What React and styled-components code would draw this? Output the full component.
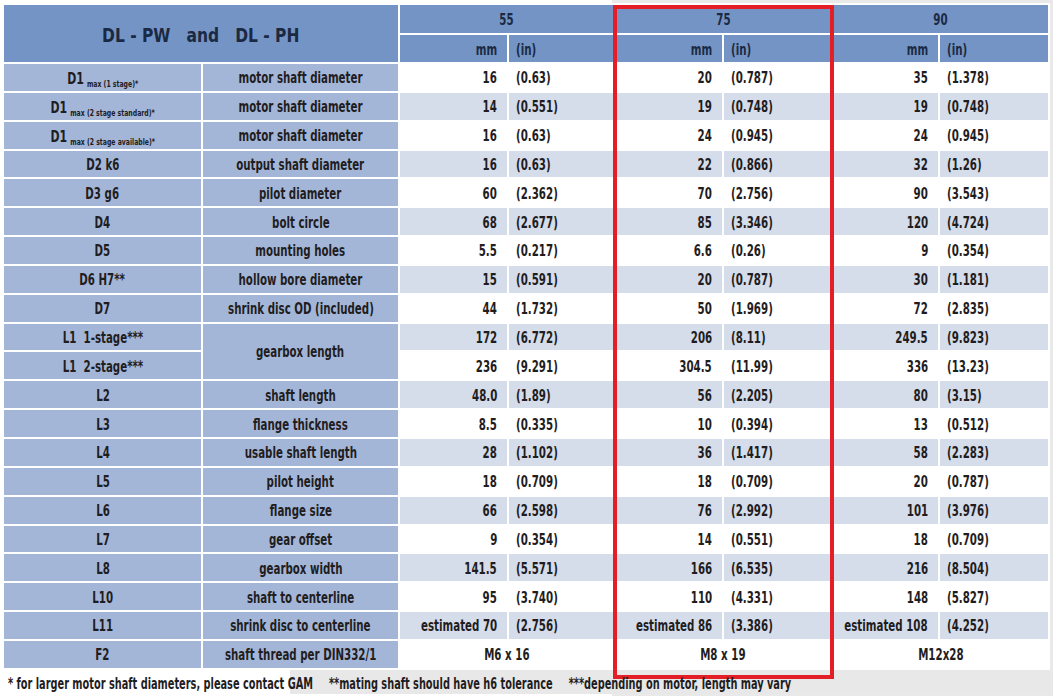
import React from 'react';
import styled, { createGlobalStyle } from 'styled-components';

const GlobalStyle = createGlobalStyle`
    body {
        margin: 0;
        background: #fff;
        font-family: "DejaVu Sans Condensed", "Liberation Sans", sans-serif;
    }
`;

const sizes = ['55', '75', '90'];

const rows = [
    { label: 'D1', sub: 'max (1 stage)*', desc: 'motor shaft diameter', vals: [['16', '(0.63)'], ['20', '(0.787)'], ['35', '(1.378)']] },
    { label: 'D1', sub: 'max (2 stage standard)*', desc: 'motor shaft diameter', vals: [['14', '(0.551)'], ['19', '(0.748)'], ['19', '(0.748)']] },
    { label: 'D1', sub: 'max (2 stage available)*', desc: 'motor shaft diameter', vals: [['16', '(0.63)'], ['24', '(0.945)'], ['24', '(0.945)']] },
    { label: 'D2 k6', desc: 'output shaft diameter', vals: [['16', '(0.63)'], ['22', '(0.866)'], ['32', '(1.26)']] },
    { label: 'D3 g6', desc: 'pilot diameter', vals: [['60', '(2.362)'], ['70', '(2.756)'], ['90', '(3.543)']] },
    { label: 'D4', desc: 'bolt circle', vals: [['68', '(2.677)'], ['85', '(3.346)'], ['120', '(4.724)']] },
    { label: 'D5', desc: 'mounting holes', vals: [['5.5', '(0.217)'], ['6.6', '(0.26)'], ['9', '(0.354)']] },
    { label: 'D6 H7**', desc: 'hollow bore diameter', vals: [['15', '(0.591)'], ['20', '(0.787)'], ['30', '(1.181)']] },
    { label: 'D7', desc: 'shrink disc OD (included)', vals: [['44', '(1.732)'], ['50', '(1.969)'], ['72', '(2.835)']] },
    { label: 'L1  1-stage***', desc: 'gearbox length', span: 2, vals: [['172', '(6.772)'], ['206', '(8.11)'], ['249.5', '(9.823)']] },
    { label: 'L1  2-stage***', desc: null, vals: [['236', '(9.291)'], ['304.5', '(11.99)'], ['336', '(13.23)']] },
    { label: 'L2', desc: 'shaft length', vals: [['48.0', '(1.89)'], ['56', '(2.205)'], ['80', '(3.15)']] },
    { label: 'L3', desc: 'flange thickness', vals: [['8.5', '(0.335)'], ['10', '(0.394)'], ['13', '(0.512)']] },
    { label: 'L4', desc: 'usable shaft length', vals: [['28', '(1.102)'], ['36', '(1.417)'], ['58', '(2.283)']] },
    { label: 'L5', desc: 'pilot height', vals: [['18', '(0.709)'], ['18', '(0.709)'], ['20', '(0.787)']] },
    { label: 'L6', desc: 'flange size', vals: [['66', '(2.598)'], ['76', '(2.992)'], ['101', '(3.976)']] },
    { label: 'L7', desc: 'gear offset', vals: [['9', '(0.354)'], ['14', '(0.551)'], ['18', '(0.709)']] },
    { label: 'L8', desc: 'gearbox width', vals: [['141.5', '(5.571)'], ['166', '(6.535)'], ['216', '(8.504)']] },
    { label: 'L10', desc: 'shaft to centerline', vals: [['95', '(3.740)'], ['110', '(4.331)'], ['148', '(5.827)']] },
    { label: 'L11', desc: 'shrink disc to centerline', vals: [['estimated 70', '(2.756)'], ['estimated 86', '(3.386)'], ['estimated 108', '(4.252)']] },
    { label: 'F2', desc: 'shaft thread per DIN332/1', thread: ['M6 x 16', 'M8 x 19', 'M12x28'] },
];

const colWidths = [197, 195, 107, 104, 107, 107, 105, 108];

// condensed text: the scan uses a narrow semibold face, so squeeze the glyphs
const Content = ({ align = 'center', children }) => (
    <Inner $align={align}>
        <Txt $align={align}>{children}</Txt>
    </Inner>
);

export default function App() {
    return (
        <>
            <GlobalStyle />
            <Page>
                <Frame>
                    <Table>
                        <colgroup>
                            {colWidths.map((w, i) => <col key={i} style={{ width: w }} />)}
                        </colgroup>
                        <thead>
                            <tr>
                                <TitleCell rowSpan={2} colSpan={2}>
                                    <Title>DL - PW   and   DL - PH</Title>
                                </TitleCell>
                                {sizes.map((s) => (
                                    <HeadCell key={s} colSpan={2} $h={28}>
                                        <Content>{s}</Content>
                                    </HeadCell>
                                ))}
                            </tr>
                            <tr>
                                {sizes.map((s) => (
                                    <React.Fragment key={s}>
                                        <HeadCell $h={27}><Content align="right">mm</Content></HeadCell>
                                        <HeadCell $h={27}><Content align="left">(in)</Content></HeadCell>
                                    </React.Fragment>
                                ))}
                            </tr>
                        </thead>
                        <tbody>
                            {rows.map((row, index) => {
                                const shade = index % 2 === 1;
                                return (
                                    <tr key={index}>
                                        <LabelCell>
                                            <Content>
                                                {row.sub ? (
                                                    <>
                                                        <Sym>{row.label}</Sym>
                                                        <Sub>{row.sub}</Sub>
                                                    </>
                                                ) : row.label}
                                            </Content>
                                        </LabelCell>
                                        {row.desc && (
                                            <LabelCell rowSpan={row.span || 1}>
                                                <Content>{row.desc}</Content>
                                            </LabelCell>
                                        )}
                                        {row.thread
                                            ? row.thread.map((t, i) => (
                                                <ValueCell key={i} colSpan={2} $shade={shade}>
                                                    <Content>{t}</Content>
                                                </ValueCell>
                                            ))
                                            : row.vals.map(([mm, inch], i) => (
                                                <React.Fragment key={i}>
                                                    <ValueCell $shade={shade}><Content align="right">{mm}</Content></ValueCell>
                                                    <ValueCell $shade={shade}><Content align="left">{inch}</Content></ValueCell>
                                                </React.Fragment>
                                            ))}
                                    </tr>
                                );
                            })}
                        </tbody>
                    </Table>
                    <Highlight />
                </Frame>
                <Notes>
                    <NotesLine>
                        <span>* for larger motor shaft diameters, please contact GAM</span>
                        <span>**mating shaft should have h6 tolerance</span>
                        <span>***depending on motor, length may vary</span>
                    </NotesLine>
                </Notes>
            </Page>
        </>
    );
}

const Page = styled.div`
    width: 1053px;
    height: 696px;
    padding: 3px 0 0 2px;
    box-sizing: border-box;
    overflow: hidden;
    background: linear-gradient(to right, #fff 612px, #e9e9e9 612px);
`;

const Frame = styled.div`
    position: relative;
    width: 1048px;
`;

const Table = styled.table`
    border-collapse: separate;
    border-spacing: 2px;
    table-layout: fixed;
    width: 1048px;
    background: #fff;
    color: #1f1d1e;
    font-weight: bold;
    font-size: 15px;
    line-height: 1;

    td, th {
        padding: 0;
        overflow: hidden;
    }
`;

const Inner = styled.div`
    display: flex;
    align-items: center;
    height: 100%;
    padding-top: 3px;
    box-sizing: border-box;
    white-space: pre;
    justify-content: ${({ $align }) =>
        $align === 'right' ? 'flex-end' : $align === 'left' ? 'flex-start' : 'center'};
    padding-right: ${({ $align }) => ($align === 'right' ? '10px' : '0')};
    padding-left: ${({ $align }) => ($align === 'left' ? '7px' : '0')};
`;

const Txt = styled.span`
    display: inline-block;
    flex-shrink: 0;
    transform: scaleX(0.76);
    transform-origin: ${({ $align }) => $align};
`;

const TitleCell = styled.th`
    background: #7394c4;
    text-align: center;
`;

const Title = styled.span`
    display: inline-block;
    color: #1b2942;
    font-size: 20px;
    white-space: pre;
    transform: scaleX(0.86);
    padding-top: 2px;
`;

const HeadCell = styled.th`
    background: #7394c4;
    color: #1b2942;
    height: ${({ $h }) => $h}px;
    font-weight: bold;
`;

const LabelCell = styled.td`
    background: #a4b6d8;
    height: 26.85px;
`;

const ValueCell = styled.td`
    background: ${({ $shade }) => ($shade ? '#d5dcea' : '#fff')};
    height: 26.85px;
`;

const Sym = styled.span`
    font-size: 16px;
`;

const Sub = styled.span`
    font-size: 9px;
    position: relative;
    top: 3px;
    margin-left: 4px;
`;

const Highlight = styled.div`
    position: absolute;
    left: 611px;
    top: 2px;
    width: 221px;
    height: 674px;
    border: 4px solid #e31e26;
    box-sizing: border-box;
    pointer-events: none;
`;

const Notes = styled.div`
    height: 24px;
    padding: 4px 0 0 8px;
    margin-left: -2px;
    box-sizing: border-box;
    display: flex;
    align-items: center;
    background: linear-gradient(to right, #fff 290px, #e8e8e8 290px);
    color: #1f1d1e;
    font-size: 15px;
    font-weight: bold;
    white-space: pre;
`;

const NotesLine = styled.div`
    display: inline-flex;
    gap: 22px;
    flex-shrink: 0;
    transform: scaleX(0.725);
    transform-origin: left;
`;
